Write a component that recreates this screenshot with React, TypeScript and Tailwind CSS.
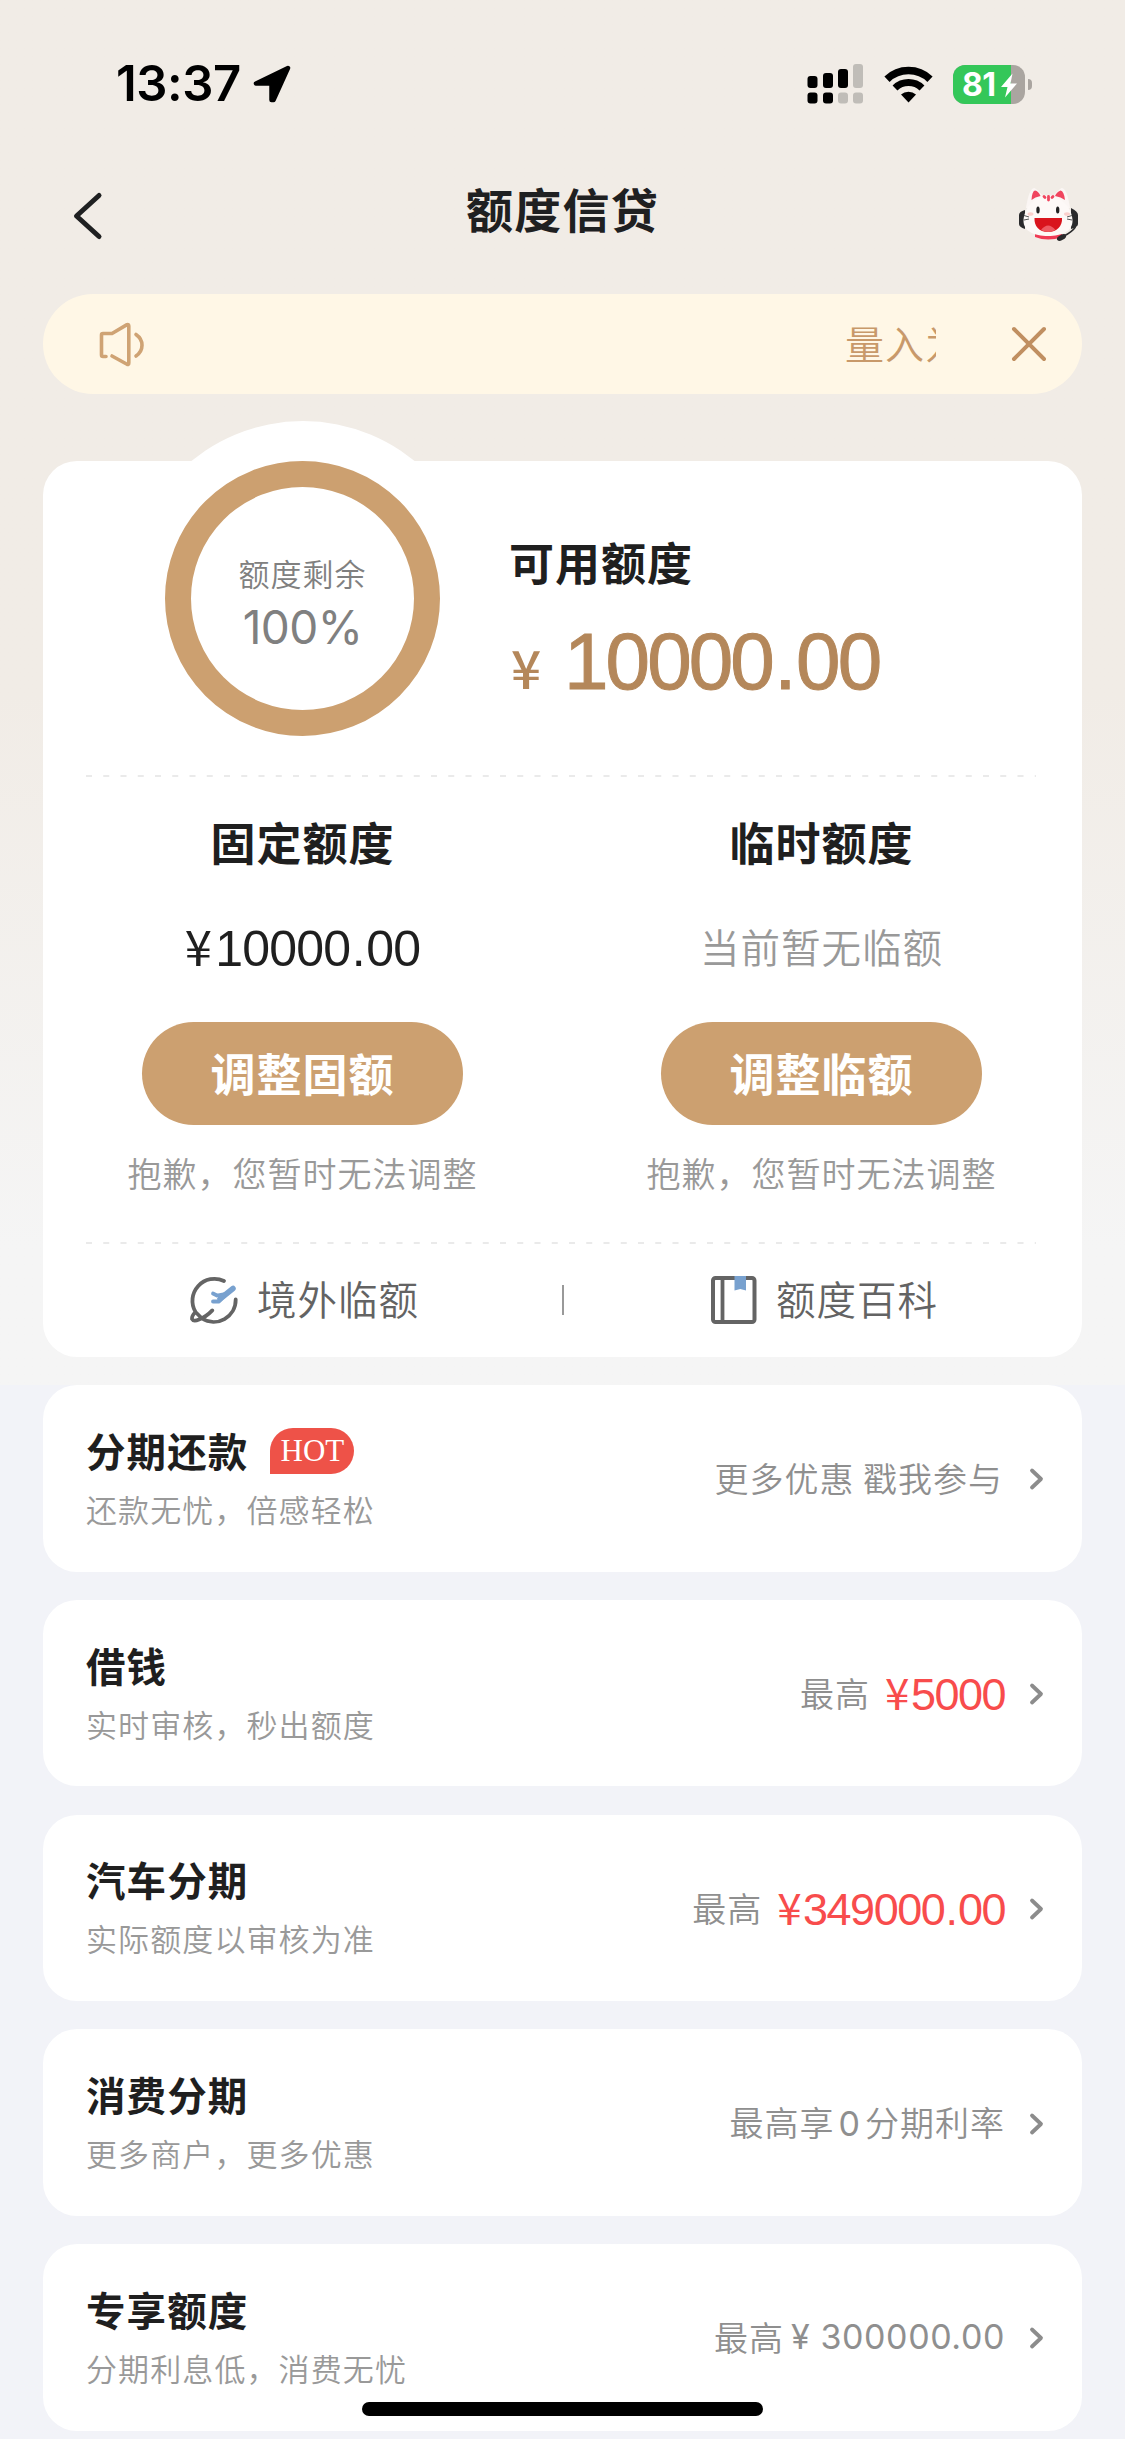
import type { ReactNode } from 'react';

interface Offer {
  title: string;
  desc: string;
  hot?: boolean;
  extra: ReactNode;
}

const offers: Offer[] = [
  {
    title: '分期还款',
    desc: '还款无忧，倍感轻松',
    hot: true,
    extra: <span className="mr-[2px]">更多优惠 戳我参与</span>,
  },
  {
    title: '借钱',
    desc: '实时审核，秒出额度',
    extra: <RedAmount value="5000" />,
  },
  {
    title: '汽车分期',
    desc: '实际额度以审核为准',
    extra: <RedAmount value="349000.00" />,
  },
  {
    title: '消费分期',
    desc: '更多商户，更多优惠',
    extra: (
      <span>
        最高享<span className="mx-[4px] font-[Inter] font-normal">0</span>分期利率
      </span>
    ),
  },
  {
    title: '专享额度',
    desc: '分期利息低，消费无忧',
    extra: (
      <span className="flex items-center">
        最高
        <span className="ml-[7px] font-[Inter] font-normal tracking-[0.6px]">¥&nbsp;300000.00</span>
      </span>
    ),
  },
];

function Digits({ value }: { value: string }) {
  const [whole, decimals] = value.split('.');
  return (
    <span className="font-['Liberation_Sans']">
      {whole}
      {decimals && <span className="mx-[0.03em]">.</span>}
      {decimals}
    </span>
  );
}

function RedAmount({ value }: { value: string }) {
  return (
    <span className="flex items-center">
      最高
      <span className="ml-[15px] flex items-baseline text-[45px] font-normal tracking-[-1.5px] text-[#f84c4c]">
        <span className="mr-[3px] text-[44px]">¥</span>
        <Digits value={value} />
      </span>
    </span>
  );
}

function StatusBar() {
  return (
    <div className="flex h-[140px] items-center justify-between pr-[93px] pl-[116px] pt-[28px]">
      <div className="flex items-center gap-[12px]">
        <span className="font-[Inter] text-[49px] leading-[56px] font-semibold tracking-[-0.4px] text-black">13:37</span>
        <svg className="h-[38px] w-[38px]" viewBox="0 0 38 38">
          <path d="M35 3 L3 18.5 H18.5 V35 H20.5 Z" fill="#000" stroke="#000" strokeWidth="4.5" strokeLinejoin="round" />
        </svg>
      </div>
      <div className="flex items-center">
        <svg className="h-[40px] w-[57px]" viewBox="0 0 57 40">
          <rect x="0.5" y="12" width="10" height="12" rx="3" />
          <rect x="16" y="9" width="10" height="15" rx="3" />
          <rect x="31" y="5" width="10" height="19" rx="3" />
          <rect x="46" y="0" width="10" height="24" rx="3" fill="#c0bdb8" />
          <rect x="0.5" y="28.5" width="10" height="11" rx="3" />
          <rect x="16" y="28.5" width="10" height="11" rx="3" />
          <rect x="31" y="28.5" width="10" height="11" rx="3" fill="#c0bdb8" />
          <rect x="46" y="28.5" width="10" height="11" rx="3" fill="#c0bdb8" />
        </svg>
        <svg className="ml-[20px] h-[37px] w-[49px]" viewBox="0 0 49 37">
          <path d="M3 13.2 A31 31 0 0 1 46 13.2" fill="none" stroke="#000" strokeWidth="7.5" />
          <path d="M11 22 A19.5 19.5 0 0 1 38 22" fill="none" stroke="#000" strokeWidth="7" />
          <path d="M24.5 36.5 L17 28.6 A11 11 0 0 1 32 28.6 Z" />
        </svg>
        <div className="relative ml-[20px] flex h-[39px] w-[72px] items-center overflow-hidden rounded-[12px] bg-[#aaa5a0]">
          <div className="absolute inset-y-0 left-0 w-[58px] bg-[#34c759]" />
          <span className="relative ml-[9px] font-[Inter] text-[32px] leading-[39px] font-bold tracking-[-0.6px] text-white">81</span>
          <svg className="absolute top-[8px] left-[47px] h-[25px] w-[18px]" viewBox="0 0 18 25">
            <path d="M12.5 0.5 L1 14 H7.5 L5 24.5 L17 10.5 H10.5 Z" fill="#fff" />
          </svg>
        </div>
        <div className="ml-[3px] h-[11px] w-[4px] rounded-r-full bg-[#aaa5a0]" />
      </div>
    </div>
  );
}

function CatIcon() {
  return (
    <svg className="h-[58px] w-[62px]" viewBox="0 0 62 58">
      <path d="M1 29 Q1 25.5 7 24 V43 Q1 41 1 38 Z" fill="#2a2a2c" />
      <path d="M60 29 Q60 25.5 53 22 V43 Q60 41 60 38 Z" fill="#2a2a2c" />
      <path d="M8 22 Q11 2 16.5 2 Q20.5 4 24.5 9.5 H36 Q40 4 43.5 2 Q49 2 52 22 Z" fill="#fbf6f4" />
      <path d="M17 47 H44 V51 Q30 56 17 51 Z" fill="#f03a55" />
      <path d="M30 9.5 C46 9.5 54.5 25 54.5 35 C54.5 45 44 50 30 50 C16 50 5.5 45 5.5 35 C5.5 25 14 9.5 30 9.5 Z" fill="#fdf9f7" />
      <path d="M13.5 14 Q14 5 17 4.5 Q20.5 5 22.5 10 Q17 11 13.5 14 Z" fill="#f0455e" />
      <path d="M47 14 Q46 5 42.5 4.5 Q38.5 6 37 10 Q43 11 47 14 Z" fill="#f0455e" />
      <path d="M26 10.5 L27 11.5 M30.5 10.5 V14 M35 10.5 L34 11.5" stroke="#f0455e" strokeWidth="2.8" strokeLinecap="round" />
      <ellipse cx="20" cy="24" rx="1.7" ry="3.5" fill="#222" />
      <ellipse cx="39.7" cy="24" rx="1.7" ry="3.5" fill="#222" />
      <ellipse cx="12.5" cy="28" rx="3" ry="1.8" fill="#fbd0cc" />
      <ellipse cx="49" cy="28" rx="3" ry="1.8" fill="#fbd0cc" />
      <path d="M6 29.5 L11 31 M6 34 L11 33 M54 29.5 L49 31 M54 34 L49 33" stroke="#555" strokeWidth="1" />
      <path d="M16.5 32 H44 C44.5 40 39 46 30 46 C21 46 16 40 16.5 32 Z" fill="#d9141c" />
      <path d="M23 44 Q30 35 37.5 44 Q30 48 23 44 Z" fill="#ee5a62" />
      <path d="M57.5 41 Q54 46 46 50" fill="none" stroke="#2a2a2c" strokeWidth="1.5" />
      <ellipse cx="43.5" cy="51.5" rx="5" ry="2.6" fill="#2a2a2c" transform="rotate(-28 43.5 51.5)" />
    </svg>
  );
}

function NavBar() {
  return (
    <div className="flex h-[154px] items-start justify-between pr-[45px] pl-[72px]">
      <svg className="mt-[51px] h-[50px] w-[31px]" viewBox="0 0 31 50">
        <path d="M27 4.5 L4.5 25 L27 45.5" fill="none" stroke="#1f2021" strokeWidth="5" strokeLinecap="round" strokeLinejoin="round" />
      </svg>
      <h1 className="mt-[36px] ml-[4px] text-[47px] leading-[64px] font-bold tracking-[1.2px] text-[#1f2021]">额度信贷</h1>
      <div className="mt-[46px]">
        <CatIcon />
      </div>
    </div>
  );
}

function Notice() {
  return (
    <div className="mx-[43px] flex h-[100px] items-center rounded-full bg-[#fff7e6] pr-[35px] pl-[55px] text-[#c8996a]">
      <svg className="h-[46px] w-[49px]" viewBox="0 0 49 46" fill="none" stroke="#cfa374" strokeWidth="3.6" strokeLinecap="round" strokeLinejoin="round">
        <path d="M8 35.5 H5 Q3.5 35.5 3.5 34 V14 Q3.5 12.5 5 12.5 H14 L29 3.6 Q30.8 3 30.8 5 V42 Q30.8 44 29 43.3 L14 35" />
        <path d="M38 13.5 C46 19 46 29.5 38 35" />
      </svg>
      {/* scrolling text, clipped by its own box */}
      <div className="mb-[5px] ml-auto w-[91px] overflow-hidden text-[39px] leading-[60px] font-[350] tracking-[1px] whitespace-nowrap">量入为出</div>
      <svg className="ml-[75px] h-[36px] w-[36px]" viewBox="0 0 36 36">
        <path d="M3 3 L33 33 M33 3 L3 33" stroke="#c08f61" strokeWidth="4" strokeLinecap="round" />
      </svg>
    </div>
  );
}

function DashedLine() {
  return (
    <svg className="mx-[43px] block h-[2px] w-[950px]">
      <line x1="0" y1="1" x2="950" y2="1" stroke="#eaeaea" strokeWidth="2" strokeDasharray="6 11.25" />
    </svg>
  );
}

function QuotaColumn({ title, action, children }: { title: string; action: string; children: ReactNode }) {
  return (
    <div className="flex w-[519px] flex-col items-center">
      <h2 className="text-[45px] leading-[60px] font-bold tracking-[1px] text-[#1f1f1f]">{title}</h2>
      <div className="mt-[45px] flex h-[60px] items-center">{children}</div>
      <button className="mt-[45px] h-[103px] w-[321px] rounded-full bg-[#cca070] pb-[2px] text-[45px] font-bold tracking-[1px] text-white">
        {action}
      </button>
      <p className="mt-[24px] text-[34px] leading-[48px] font-[350] tracking-[1px] text-[#999]">抱歉，您暂时无法调整</p>
    </div>
  );
}

function QuotaCard() {
  return (
    <section className="relative mx-[43px] mt-[67px] h-[896px] rounded-[34px] bg-white">
      {/* bump behind the ring */}
      <div className="absolute -top-[40px] left-[84px] h-[352px] w-[352px] rounded-full bg-white" />
      <div className="relative flex h-[314px] pl-[122px]">
        <div className="flex h-[275px] w-[275px] flex-col items-center rounded-full border-[26px] border-[#cca070] pt-[64px] text-[#808080]">
          <span className="text-[31px] leading-[44px] font-[350] tracking-[1px]">额度剩余</span>
          <span className="mt-[4px] font-[Inter] text-[46px] leading-[56px] font-[380] tracking-[-0.6px]">100%</span>
        </div>
        <div className="ml-[69px] pt-[69px]">
          <h2 className="text-[45px] leading-[64px] font-bold tracking-[1px] text-[#1f1f1f]">可用额度</h2>
          <p className="mt-[18px] flex items-baseline leading-[84px] text-[#b4875a]">
            <span className="w-[55px] pl-[2px] text-[53px] font-medium">¥</span>
            <span className="text-[80px] tracking-[-2.9px] [-webkit-text-stroke:1px_#b4875a]">
              <Digits value="10000.00" />
            </span>
          </p>
        </div>
      </div>
      <DashedLine />
      <div className="relative flex h-[465px] pt-[35px]">
        <QuotaColumn title="固定额度" action="调整固额">
          <span className="flex items-baseline text-[50px] tracking-[-0.8px] text-[#1f1f1f]">
            <span className="mr-[4px] text-[49px]">¥</span>
            <Digits value="10000.00" />
          </span>
        </QuotaColumn>
        <QuotaColumn title="临时额度" action="调整临额">
          <span className="mb-[3px] text-[39.5px] font-[350] tracking-[1px] text-[#999]">当前暂无临额</span>
        </QuotaColumn>
      </div>
      <DashedLine />
      <div className="flex h-[112px] items-center text-[39.5px] font-[350] tracking-[1px] text-[#636363]">
        <div className="flex w-[519px] items-center pl-[145px]">
          <svg className="h-[50px] w-[50px]" viewBox="0 0 50 50" fill="none" strokeLinecap="round" strokeLinejoin="round">
            <path
              d="M36 6 A22 22 0 0 0 7.5 37 Q3.5 41 4 44 Q5.5 47 11 44.5 Q18 42 24.3 35.4 M7.5 37 L14 43.5 A22 22 0 0 0 47.7 24.5"
              stroke="#646464"
              strokeWidth="3.8"
            />
            <path d="M45 13.5 L32 24" stroke="#78a1cf" strokeWidth="5.5" />
            <path d="M25 18.5 L29 20.5 L37 19 M25 26.5 H31 L36 21" stroke="#78a1cf" strokeWidth="3.8" />
          </svg>
          <span className="mb-[5px] ml-[19px]">境外临额</span>
        </div>
        <div className="h-[30px] w-[2px] bg-[#999]" />
        <div className="flex items-center pl-[146px]">
          <svg className="h-[50px] w-[47px]" viewBox="0 0 47 50">
            <rect x="3" y="3" width="41.5" height="44" rx="2.5" fill="none" stroke="#646464" strokeWidth="4" />
            <path d="M12.5 3 V47" stroke="#646464" strokeWidth="3.8" />
            <path d="M24.5 1 H36 V15.5 L30.3 14 L24.5 15.5 Z" fill="#78a1cf" />
          </svg>
          <span className="mb-[5px] ml-[19px]">额度百科</span>
        </div>
      </div>
    </section>
  );
}

function OfferCard({ title, desc, hot, extra }: Offer) {
  return (
    <div className="flex h-[186.5px] items-center justify-between rounded-[34px] bg-white pr-[37px] pl-[43px]">
      <div className="mb-[4px]">
        <div className="flex h-[60px] items-center">
          <h3 className="text-[39.5px] leading-[60px] font-bold tracking-[1.1px] text-[#1f1f1f]">{title}</h3>
          {hot && (
            <span className="mt-[3px] ml-[22px] flex h-[46px] w-[84px] items-center justify-center rounded-[23px] rounded-bl-none bg-[#ee5248] font-['Liberation_Serif'] text-[31px] text-white">
              HOT
            </span>
          )}
        </div>
        <p className="mt-[5px] text-[31px] leading-[48px] font-[350] tracking-[1.1px] text-[#999]">{desc}</p>
      </div>
      <div className="flex items-center text-[34px] leading-[60px] font-[350] tracking-[1px] whitespace-nowrap text-[#8f8f8f]">
        {extra}
        <svg className="mt-[2px] ml-[24px] h-[24px] w-[16px]" viewBox="0 0 16 24">
          <path d="M3 3.5 L12 12 L3 20.5" fill="none" stroke="#8c8c8c" strokeWidth="3.8" strokeLinecap="round" strokeLinejoin="round" />
        </svg>
      </div>
    </div>
  );
}

export default function App() {
  return (
    <div className="relative h-[2439px] w-[1125px] overflow-hidden bg-[#f2f3f8] font-['Noto_Sans_CJK_SC',sans-serif]">
      <div className="h-[1385px] bg-linear-to-b from-[#f1ece6] from-50% to-[#f5f5f5] to-90%">
        <StatusBar />
        <NavBar />
        <Notice />
        <QuotaCard />
      </div>
      <div className="mx-[43px] flex flex-col gap-[28.3px]">
        {offers.map((offer) => (
          <OfferCard key={offer.title} {...offer} />
        ))}
      </div>
      {/* home indicator */}
      <div className="absolute bottom-[23px] left-[362px] h-[14px] w-[401px] rounded-full bg-black" />
    </div>
  );
}
